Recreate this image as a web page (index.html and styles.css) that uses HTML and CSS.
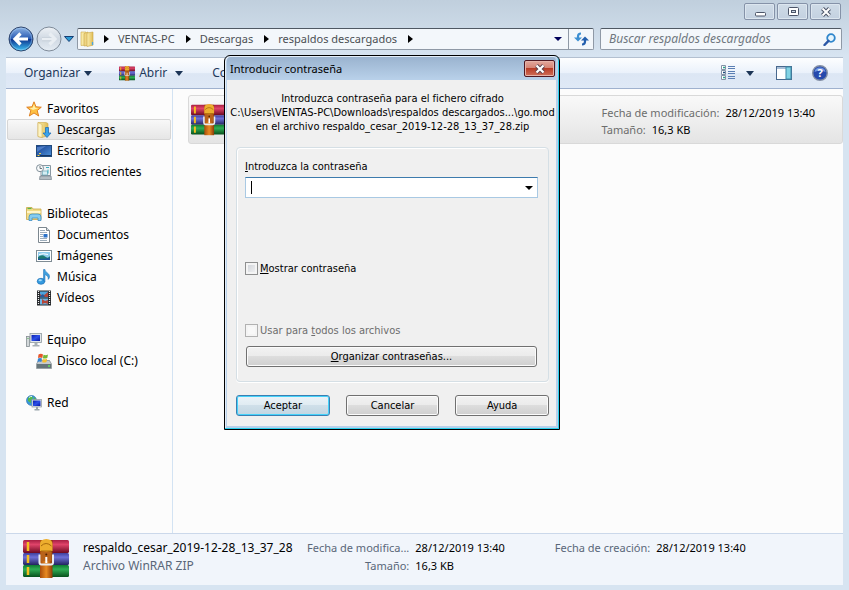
FILE: index.html
```html
<!DOCTYPE html>
<html lang="es">
<head>
<meta charset="utf-8">
<title>respaldos descargados</title>
<link rel="stylesheet" href="styles.css">
</head>
<body>
<svg class="defs" aria-hidden="true">
  <defs>
    <linearGradient id="red" x2="0" y2="1"><stop offset="0" stop-color="#a81f43"/><stop offset=".35" stop-color="#e0446a"/><stop offset="1" stop-color="#6d0a22"/></linearGradient>
    <linearGradient id="blue" x2="0" y2="1"><stop offset="0" stop-color="#3e3f9c"/><stop offset=".35" stop-color="#6e70d8"/><stop offset="1" stop-color="#23245f"/></linearGradient>
    <linearGradient id="green" x2="0" y2="1"><stop offset="0" stop-color="#0f7a30"/><stop offset=".35" stop-color="#2fae55"/><stop offset="1" stop-color="#07501c"/></linearGradient>
    <linearGradient id="strap"><stop offset="0" stop-color="#a84c0c"/><stop offset=".5" stop-color="#e88a22"/><stop offset="1" stop-color="#8a3a08"/></linearGradient>
    <linearGradient id="folder" x2="1"><stop offset="0" stop-color="#fbeeb0"/><stop offset="1" stop-color="#e0bd55"/></linearGradient>
    <linearGradient id="orb" x2="0" y2="1"><stop offset="0" stop-color="#8fb4e4"/><stop offset=".48" stop-color="#2a5cb4"/><stop offset=".5" stop-color="#0b2f8c"/><stop offset="1" stop-color="#3fc4f4"/></linearGradient>
    <linearGradient id="orb-off" x2="0" y2="1"><stop offset="0" stop-color="#eef2f6"/><stop offset=".5" stop-color="#cfd8e2"/><stop offset="1" stop-color="#e6edf4"/></linearGradient>
    <linearGradient id="screen" x2="1" y2="1"><stop offset="0" stop-color="#0a1fae"/><stop offset=".5" stop-color="#2c50e8"/><stop offset="1" stop-color="#0818a0"/></linearGradient>
    <linearGradient id="sky" x2="1" y2="1"><stop offset="0" stop-color="#163a8c"/><stop offset="1" stop-color="#4d94dc"/></linearGradient>
    <symbol id="rar" viewBox="0 0 46 40">
      <rect y="1" width="46" height="13" rx="1.5" fill="url(#red)"/>
      <rect y="14" width="46" height="12" rx="1.5" fill="url(#blue)"/>
      <rect y="26" width="46" height="12" rx="1.5" fill="url(#green)"/>
      <path d="M5 3v9M5 16v8M5 28v8" stroke="#f5c020" stroke-width="2.5"/>
      <rect x="17" y="1" width="12.500" height="38" fill="url(#strap)"/>
      <path d="M17 12V5q0-4.500 6.300-5 6.200.5 6.200 5v7z" fill="#edae2e"/>
      <path d="M18 7q5-5 10.500 0M18 12h10.500" fill="none" stroke="#a86a0c"/>
      <rect x="18" y="13" width="10.500" height="9" fill="#b8621a"/>
      <path d="M17.500 16.500h-1v7q0 2 2 2h9.500q2 0 2-2v-7h-1" fill="none" stroke="#e8ebf0" stroke-width="2"/>
      <path d="M23.300 18v6" stroke="#fff" stroke-width="2"/>
      <circle cx="23.300" cy="15.500" r="1" fill="#4d2203"/>
    </symbol>
    <symbol id="folder-icon" viewBox="0 0 16 16">
      <path d="M1 1h5l1 13-6 .5z" fill="#f8e9a4" stroke="#cda94a" stroke-width=".6"/>
      <path d="M4 2.500 8 1v13.500l-4 .5z" fill="#eed584" stroke="#c9a545" stroke-width=".6"/>
      <path d="M7 2l6-1v13.200L7 15.500z" fill="url(#folder)" stroke="#c9a545" stroke-width=".6"/>
      <path d="M12.500 11v3" stroke="#49a5e0" stroke-width="1.300"/>
    </symbol>
    <symbol id="down-icon" viewBox="0 0 16 16">
      <path d="M2 .5h8l2 1v12l-6 2-4-1z" fill="url(#folder)" stroke="#cda94a" stroke-width=".6"/>
      <path d="M2 .5l4 2v13l-4-1z" fill="#fdf3c3" stroke="#cda94a" stroke-width=".5"/>
      <path d="M9.500 5.500h3V11H15l-4 4.500L7 11h2.500z" fill="#39a3ec" stroke="#1767b5" stroke-width=".7"/>
    </symbol>
    <symbol id="star-icon" viewBox="0 0 16 16">
      <path d="M8 .8l2 5 5.300.4-4.100 3.400 1.500 5.400L8 12l-4.700 3 1.500-5.400L.7 6.200 6 5.800z" fill="#fdc042" stroke="#dd781a" stroke-width=".9" stroke-linejoin="round"/>
      <path d="M8 3l1.200 3.800 3.500.2L7 9 3.500 7l3.200-.3z" fill="#fff0a8"/>
    </symbol>
    <symbol id="desktop-icon" viewBox="0 0 16 16">
      <rect x=".5" y="2.500" width="15" height="11" fill="url(#sky)" stroke="#214a7c"/>
      <path d="M1 4l9-1-9 6z" fill="#6d9ddd" opacity=".6"/>
      <path d="M1 12.500h14" stroke="#163766"/><path d="M1.500 12.500h2M3 10.500h2" stroke="#f2d34a"/>
    </symbol>
    <symbol id="recent-icon" viewBox="0 0 16 16">
      <path d="M5 1.500h9.500v10h-9.500z" fill="#eef2f4" stroke="#8a98a2"/>
      <path d="M4 12h11l.5 3.500h-12z" fill="#b4bcc2" stroke="#77838c" stroke-width=".7"/>
      <rect x="6.500" y="7" width="5" height="4" fill="#d6eef4" stroke="#6ba6b6" stroke-width=".7"/>
      <path d="M10 3.500h3M12 5.500v4" stroke="#39adc0"/>
      <circle cx="4" cy="4.200" r="3.500" fill="#f8fafb" stroke="#82909a"/><path d="M4 2v2.500h2" fill="none" stroke="#4a5861" stroke-width=".8"/>
    </symbol>
    <symbol id="library-icon" viewBox="0 0 16 16">
      <path d="M.5 1.500H6L7 3h8v10.500H.5z" fill="#f1dc88" stroke="#c9a848" stroke-width=".8"/>
      <path d="M1.500 2.500h4" stroke="#59b64a" stroke-width="1.200"/><path d="M1 6h13.500" stroke="#fff5c8" stroke-width="2"/>
      <path d="M3 14.500V11q0-3 3-3h6q3 0 3 3v3.500h-3V12H6v2.500z" fill="#86cdf0" stroke="#3f8fc4" stroke-width=".8"/>
    </symbol>
    <symbol id="doc-icon" viewBox="0 0 16 16">
      <path d="M2.500.5h8l3 3v12h-11z" fill="#fff" stroke="#7c878f"/><path d="M10.500.5v3h3" fill="#d7dfe5" stroke="#7c878f"/>
      <path d="M4 3.500h5M4 5.500h7M4 7.500h3M4 9.500h3M4 11.500h7M4 13.500h7" stroke="#9dadbb"/><rect x="7.500" y="7" width="4" height="3.500" fill="#2c72c8"/>
    </symbol>
    <symbol id="image-icon" viewBox="0 0 16 16">
      <rect x=".5" y="2.500" width="15" height="11" fill="#fff" stroke="#7f8c94"/><rect x="2" y="4" width="12" height="8" fill="#8fcbec"/>
      <path d="M2 9q4-3 7-.5t5-.5v4H2z" fill="#1d7a70"/><path d="M2 10.500q5 1 12-1V12H2z" fill="#1e5698"/><path d="M3 6.500q4-1.500 9 0" stroke="#fff" fill="none"/>
    </symbol>
    <symbol id="music-icon" viewBox="0 0 16 16">
      <ellipse cx="5" cy="12.300" rx="3.800" ry="3" fill="#349be0" stroke="#1c6fb4" stroke-width=".7"/><ellipse cx="4.200" cy="11.300" rx="1.700" ry="1" fill="#a7dbf7"/>
      <path d="M7.500 12V.5h1.500c0 3 5 3.500 4.500 7.500-.3 1.500-.8 2-1.500 2.500C13 7 9.500 6 9 5.500v7z" fill="#3f9fdd" stroke="#1c6fb4" stroke-width=".5"/>
    </symbol>
    <symbol id="video-icon" viewBox="0 0 16 16">
      <rect x="1" y=".5" width="14" height="15" fill="#26292c"/><rect x="4" y="1.500" width="8" height="6" fill="#4fa3dc"/><rect x="4" y="8.500" width="8" height="6" fill="#6fb5e4"/>
      <path d="M4 4l3 2 5-4v5H4zM6 9l3 2 3-1v4l-3-1-3 1z" fill="#b2463a"/><path d="M4 6l3-2 2 3H4z" fill="#2a5a9a"/>
      <path d="M2.500 1v14M13.500 1v14" stroke="#f0f0f0" stroke-width="1.200" stroke-dasharray="1 1"/>
    </symbol>
    <symbol id="pc-icon" viewBox="0 0 16 16">
      <rect x=".5" y="4.500" width="3" height="10" fill="#d3d8da" stroke="#848d92" stroke-width=".8"/><path d="M1.500 6.500h1" stroke="#48b348"/>
      <rect x="4" y="1.500" width="11.500" height="9" fill="#e2e6ea" stroke="#8e999f" stroke-width=".8"/><rect x="5.500" y="3" width="8.500" height="6" fill="url(#screen)"/>
      <path d="M8.500 11h3v2h2v1.500H6.500V13h2z" fill="#a7b0b5"/>
    </symbol>
    <symbol id="disk-icon" viewBox="0 0 16 16">
      <path d="M2.500 7.500h11L15.500 11v4.500H.5V11z" fill="#c4cacd" stroke="#7b8589" stroke-width=".7"/><rect x="1" y="11" width="14" height="4" fill="#66757a"/><path d="M12 13h2" stroke="#5fe25f" stroke-width="1.400"/>
      <path d="M2.500 1.500q2.500-1.500 4.500 0L6.300 5Q4 4 2 5z" fill="#e7552a"/><path d="M7.500 1.800q2.500 1 4.500-.3L11.300 5q-2.500 1-4.500.2z" fill="#77b838"/>
      <path d="M2 5.600Q4 4.600 6 5.600L5.400 9q-2-1-4 0z" fill="#3583d0"/><path d="M6.700 5.900q2.300.8 4.400-.2L10.500 9q-2.200 1-4.300.2z" fill="#f5bd2e"/>
    </symbol>
    <symbol id="net-icon" viewBox="0 0 16 16">
      <circle cx="5.500" cy="5.500" r="5" fill="#3999dc" stroke="#2a6aa8" stroke-width=".6"/><path d="M2 3q2-2.500 4-2l1 2-2 2v3L2 6zM8 2l2 2v2L7.500 6z" fill="#56b948"/><path d="M3 2.500q1.500-1.300 3-1" stroke="#d8f3ff" fill="none"/>
      <rect x="6" y="4.500" width="9.500" height="7.500" fill="#dfe4e8" stroke="#8b979d" stroke-width=".7"/><rect x="7" y="5.500" width="7.500" height="5.500" fill="url(#screen)"/><path d="M10 12h2v2h1.500v1.500h-5V14H10z" fill="#9aa5ab"/>
    </symbol>
  </defs>
</svg>

<div class="window">
  <header class="caption">
    <button class="cap" aria-label="Minimizar"><svg width="12" height="10"><rect x="1.500" y="5.500" width="10" height="3.500" rx="1" fill="#fff" stroke="#4c5568"/></svg></button>
    <button class="cap" aria-label="Maximizar"><svg width="12" height="10"><rect x="1.500" y=".5" width="10" height="8" rx="1" fill="#fff" stroke="#4c5568"/><rect x="4.500" y="3.500" width="4" height="2" fill="#cbd7e4" stroke="#4c5568"/></svg></button>
    <button class="cap" aria-label="Cerrar"><svg width="12" height="10"><path d="M2.500 1.500l7 7M9.500 1.500l-7 7" stroke="#4c5568" stroke-width="4"/><path d="M2.500 1.500l7 7M9.500 1.500l-7 7" stroke="#fff" stroke-width="2"/></svg></button>
  </header>

  <nav class="navbar">
    <div class="orbs">
      <button class="orb" aria-label="Atrás"><svg width="26" height="26"><circle cx="13" cy="13" r="12" fill="url(#orb)" stroke="#32486e"/><circle cx="13" cy="13" r="10.800" fill="none" stroke="#a9d1f2" stroke-width=".7" opacity=".7"/><path d="M20 13H8M12.500 7.500L7 13l5.500 5.500" fill="none" stroke="#fff" stroke-width="3.200"/></svg></button>
      <button class="orb" aria-label="Adelante"><svg width="26" height="26"><circle cx="13" cy="13" r="12" fill="url(#orb-off)" stroke="#7f8b99"/><path d="M6 13h12M13.500 7.500L19 13l-5.500 5.500" fill="none" stroke="#e9eef3" stroke-width="3.200"/><path d="M6 11.500h9.500M6 14.700h9.500" stroke="#bcc7d2" stroke-width=".6"/></svg></button>
      <button class="history" aria-label="Páginas recientes"><svg width="10" height="6"><path d="M.5.5h9L5 5.500z" fill="#2c9ad4" stroke="#163f75"/></svg></button>
    </div>
    <div class="address">
      <svg class="addr-icon" width="16" height="18"><use href="#folder-icon"/></svg>
      <i class="crumb-arrow"></i><a class="crumb" href="#">VENTAS-PC</a>
      <i class="crumb-arrow"></i><a class="crumb" href="#">Descargas</a>
      <i class="crumb-arrow"></i><a class="crumb" href="#">respaldos descargados</a>
      <i class="crumb-arrow"></i>
      <button class="drop" aria-label="Ubicaciones anteriores"><i class="tri navy"></i></button>
      <button class="refresh" aria-label="Actualizar"><svg width="15" height="14"><path d="M7 1.500Q4 1.500 4 4.500V7" fill="none" stroke="#3c8fd2" stroke-width="2.200"/><path d="M0 5.500h8L4 9.500z" fill="#3c8fd2"/><path d="M8 12.500q3 0 3-3V7" fill="none" stroke="#235fae" stroke-width="2.200"/><path d="M7 8.500h8L11 4.500z" fill="#235fae"/></svg></button>
    </div>
    <label class="search">
      <input type="search" placeholder="Buscar respaldos descargados" aria-label="Buscar respaldos descargados">
      <svg width="13" height="13"><circle cx="8" cy="5" r="3.800" fill="#e6f5fd" stroke="#2f86cc" stroke-width="1.800"/><path d="M5.500 7.800L1.500 12" stroke="#2b57a6" stroke-width="2.400" stroke-linecap="round"/></svg>
    </label>
  </nav>

  <div class="toolbar">
    <button class="tool organize">Organizar <i class="tri"></i></button>
    <button class="tool open"><svg width="16" height="15" viewBox="0 0 46 40" preserveAspectRatio="none"><use href="#rar" width="46" height="40"/></svg>Abrir <i class="tri"></i></button>
    <button class="tool">Co</button>
    <span class="spacer"></span>
    <button class="tool views" aria-label="Cambiar la vista"><svg width="14" height="16"><path d="M.5.5h4v4h-4zM.5 5.500h4v4h-4zM.5 10.500h4v4h-4z" fill="#fff" stroke="#8291a6"/><path d="M2 2.500h2M2 12.500h2" stroke="#2aa58c" stroke-width="1.500"/><path d="M2 7.500h2" stroke="#1c4b7c" stroke-width="1.500"/><path d="M7 1.500h7M7 3.500h7M7 6.500h7M7 8.500h7M7 11.500h7M7 13.500h7" stroke="#5b7fb4"/></svg><i class="tri"></i></button>
    <button class="tool" aria-label="Panel de vista previa"><svg width="16" height="14"><rect x=".5" y=".5" width="15" height="13" fill="#fff" stroke="#48688e"/><path d="M1 2h14" stroke="#a9bfd8" stroke-width="2"/><rect x="10" y="1" width="5" height="12" fill="#82d3e4" stroke="#3d8aa8"/></svg></button>
    <button class="tool help" aria-label="Ayuda"><svg width="16" height="16"><circle cx="8" cy="8" r="7.300" fill="#2649ac" stroke="#838fa5" stroke-width="1.400"/><path d="M2.500 7q5.500-3 11 0Q13 2.500 8 2.500T2.500 7" fill="#6f94e0"/><text x="8" y="12" text-anchor="middle" class="q">?</text></svg></button>
  </div>

  <main class="body">
    <aside class="tree">
      <ul>
        <li><a class="top" href="#"><svg><use href="#star-icon"/></svg>Favoritos</a>
          <ul>
            <li><a class="selected" href="#"><svg><use href="#down-icon"/></svg>Descargas</a></li>
            <li><a href="#"><svg><use href="#desktop-icon"/></svg>Escritorio</a></li>
            <li><a href="#"><svg><use href="#recent-icon"/></svg>Sitios recientes</a></li>
          </ul></li>
        <li><a class="top" href="#"><svg><use href="#library-icon"/></svg>Bibliotecas</a>
          <ul>
            <li><a href="#"><svg><use href="#doc-icon"/></svg>Documentos</a></li>
            <li><a href="#"><svg><use href="#image-icon"/></svg>Imágenes</a></li>
            <li><a href="#"><svg><use href="#music-icon"/></svg>Música</a></li>
            <li><a href="#"><svg><use href="#video-icon"/></svg>Vídeos</a></li>
          </ul></li>
        <li><a class="top" href="#"><svg><use href="#pc-icon"/></svg>Equipo</a>
          <ul><li><a href="#"><svg><use href="#disk-icon"/></svg>Disco local (C:)</a></li></ul></li>
        <li><a class="top" href="#"><svg><use href="#net-icon"/></svg>Red</a></li>
      </ul>
    </aside>
    <section class="files">
      <article class="file">
        <svg width="36" height="32" viewBox="0 0 46 40" preserveAspectRatio="none"><use href="#rar" width="46" height="40"/></svg>
        <dl>
          <div><dt>Fecha de modificación:</dt><dd>28/12/2019 13:40</dd></div>
          <div><dt>Tamaño:</dt><dd>16,3 KB</dd></div>
        </dl>
      </article>
    </section>
  </main>

  <footer class="details">
    <svg width="46" height="40"><use href="#rar"/></svg>
    <div class="name"><strong>respaldo_cesar_2019-12-28_13_37_28</strong><span>Archivo WinRAR ZIP</span></div>
    <dl class="props">
      <dt>Fecha de modifica...</dt><dd>28/12/2019 13:40</dd>
      <dt>Tamaño:</dt><dd>16,3 KB</dd>
    </dl>
    <dl class="props"><dt>Fecha de creación:</dt><dd>28/12/2019 13:40</dd></dl>
  </footer>
</div>

<form class="dialog" role="dialog" aria-labelledby="dlg-title">
  <header class="dlg-head">
    <h1 id="dlg-title">Introducir contraseña</h1>
    <button type="button" class="close" aria-label="Cerrar"><svg width="12" height="10"><path d="M2.500 1.500l7 7M9.500 1.500l-7 7" stroke="#5c4450" stroke-width="4"/><path d="M2.500 1.500l7 7M9.500 1.500l-7 7" stroke="#fff" stroke-width="2.200"/></svg></button>
  </header>
  <div class="dlg-body">
    <p class="message">Introduzca contraseña para el fichero cifrado<br>C:\Users\VENTAS-PC\Downloads\respaldos descargados...\go.mod<br>en el archivo respaldo_cesar_2019-12-28_13_37_28.zip</p>
    <div class="group">
      <label for="pwd"><u>I</u>ntroduzca la contraseña</label>
      <div class="combo"><i class="caret"></i><input id="pwd" type="text"><button type="button" aria-label="Contraseñas guardadas"><i class="tri black"></i></button></div>
      <label class="check show"><input type="checkbox"><span><u>M</u>ostrar contraseña</span></label>
      <label class="check all"><input type="checkbox" disabled><span>Usar para <u>t</u>odos los archivos</span></label>
      <button type="button" class="btn"><span><u>O</u>rganizar contraseñas...</span></button>
    </div>
    <div class="actions">
      <button type="button" class="btn default">Aceptar</button>
      <button type="button" class="btn">Cancelar</button>
      <button type="button" class="btn">Ayuda</button>
    </div>
  </div>
</form>
</body>
</html>
```

FILE: styles.css
```css
* { box-sizing: border-box; }
body, ul, dl, dd, p, h1 { margin: 0; padding: 0; }
body {
  font: 12px/16px "Noto Sans", "Open Sans", sans-serif;
  color: #000;
  background: #d7e4f1;
}
button, input { font: inherit; color: inherit; margin: 0; padding: 0; border: 0; background: none; }
a { color: inherit; text-decoration: none; }
ul { list-style: none; }
svg { flex: none; display: block; }
.defs { position: absolute; width: 0; height: 0; }

.window {
  display: flex;
  flex-direction: column;
  min-height: 100vh;
  padding: 0 6px 5px;
  background: linear-gradient(#c0cfdd, #d7e4f1 56px);
}

.caption { display: flex; justify-content: flex-end; gap: 2px; height: 25px; padding: 3px 2px 0 0; }
.cap {
  display: grid;
  place-items: center;
  width: 31px;
  height: 17px;
  border: 1px solid #8592a8;
  border-radius: 2px;
  background: linear-gradient(#cfdbe7, #c3d1e0);
  box-shadow: inset 0 0 0 1px #dce6ef;
}

.navbar { display: flex; align-items: center; height: 32px; padding: 0 1px 4px 2px; }
.orbs { display: flex; align-items: center; gap: 2px; width: 69px; }
.address, .search {
  display: flex;
  align-items: center;
  height: 22px;
  border: 1px solid #8f99a6;
  border-top-color: #4f5863;
  border-radius: 2px;
  background: #f3f7fb;
}
.address { flex: 1; margin-right: 6px; padding-left: 2px; color: #4b4f54; font-size: 11px; white-space: nowrap; }
.addr-icon { margin-right: 8px; }
.crumb { margin: 0 11px 0 9px; }
.crumb-arrow { border: 4px solid transparent; border-left: 5px solid #000; border-right: 0; }
.drop { width: 20px; height: 20px; margin-left: auto; display: grid; place-items: center; }
.refresh { width: 25px; height: 20px; display: grid; place-items: center; border-left: 1px solid #8f99a6; }
.search { flex: 0 1 242px; padding: 0 5px 0 8px; }
.search input { flex: 1; min-width: 0; outline: 0; font-style: italic; }
.search input::placeholder { color: #707780; }

.tri { display: inline-block; border: 4px solid transparent; border-top: 5px solid #1c3557; border-bottom: 0; }
.tri.navy { border-top: 4px solid #00005a; }
.tri.black { border-top: 4px solid #000; }

.toolbar {
  display: flex;
  align-items: center;
  height: 32px;
  padding: 0 15px 0 18px;
  border-top: 1px solid #b3c0d0;
  border-bottom: 1px solid #9fb1ce;
  background: linear-gradient(#fdfeff, #eaf1fb 50%, #dce6f4 52%, #dfe9f6);
  color: #1e395b;
}
.tool { display: flex; align-items: center; gap: 4px; white-space: nowrap; }
.organize { margin-right: 27px; }
.open { margin-right: 29px; }
.open .tri { margin-left: 4px; }
.spacer { flex: 1; }
.views { gap: 11px; margin-right: 22px; }
.help { margin-left: 20px; }
.q { font: bold 11px "Noto Sans", sans-serif; fill: #fff; }

.body { display: flex; flex: 1; background: #fcfcfc; }
.tree { width: 167px; padding: 9px 1px 0; border-right: 1px solid #d3e3f3; }
.tree > ul > li { margin-bottom: 21px; }
.tree a { display: flex; align-items: center; gap: 5px; height: 21px; padding-left: 28px; border: 1px solid transparent; border-radius: 2px; }
.tree a.top { padding-left: 18px; }
.tree a.selected { border-color: #d6d6d6; background: linear-gradient(#f8f8f8, #e6e6e6); }
.tree svg { width: 16px; height: 16px; }
.files { flex: 1; padding: 6px 0 0 15px; }
.file {
  display: flex;
  align-items: center;
  justify-content: space-between;
  height: 49px;
  padding: 0 27px 0 2px;
  border: 1px solid #d9d9d9;
  border-radius: 3px;
  background: linear-gradient(#f9f9f9, #e4e4e4);
}
.file dl { font-size: 11px; line-height: 17px; padding-top: 3px; }
.file dl div { display: flex; gap: 6px; }
.file dt, .props dt { color: #6d6d6d; }

.details {
  display: flex;
  align-items: flex-start;
  height: 52px;
  padding: 5px 17px 0;
  border-top: 1px solid #cbd8ea;
  background: #f1f5fb;
  line-height: 18px;
  white-space: nowrap;
}
.name { display: flex; flex-direction: column; width: 224px; margin-left: 14px; }
.name strong { font-weight: 400; }
.name span, .props dt { color: #5a6779; }
.props { display: grid; grid-template-columns: auto auto; column-gap: 6px; margin-right: 50px; font-size: 11px; }
.props dt { text-align: right; }

.dialog {
  position: absolute;
  top: 55px;
  left: 224px;
  width: 336px;
  border: 1px solid #000;
  border-radius: 6px 6px 0 0;
  background: #b9d1ea;
  box-shadow: inset -1px -1px #2cd0ee, inset 1px 1px #e4eef8;
  padding: 1px 3px 3px 2px;
  font: 11px/14px "DejaVu Sans Condensed", "Noto Sans", sans-serif;
}
.dlg-head {
  display: flex;
  align-items: center;
  justify-content: space-between;
  height: 23px;
  padding: 0 1px 0 3px;
  border-radius: 4px 4px 0 0;
  background: linear-gradient(#9ab3cf, #b9d1ea);
}
.dlg-head h1 { font: 11px/16px "Noto Sans", sans-serif; }
.close {
  display: grid;
  place-items: center;
  width: 31px;
  height: 17px;
  border: 1px solid #4f1822;
  border-radius: 2px;
  background: linear-gradient(#e3a89d, #d58374 48%, #b83c27 50%, #d0705a);
  box-shadow: inset 0 0 0 1px #e6b3a9;
}
.dlg-body { background: #f0f0f0; padding: 12px 7px 10px 9px; }
.message { height: 55px; margin: 0 -8px; text-align: center; white-space: nowrap; }
.group {
  display: flex;
  flex-direction: column;
  padding: 12px 10px 14px 8px;
  margin-bottom: 13px;
  border: 1px solid #d5dfe5;
  border-radius: 4px;
  box-shadow: inset 1px 1px #fff, 0 1px #fff;
}
u { text-underline-offset: 1px; }
.combo {
  display: flex;
  align-items: center;
  height: 21px;
  margin: 3px 0 63px;
  padding-left: 5px;
  border: 1px solid #a9c9e3;
  border-top-color: #3d7bad;
  background: #fff;
}
.combo input { flex: 1; min-width: 0; outline: 0; }
.combo button { width: 16px; display: grid; place-items: center; }
.caret { width: 1px; height: 13px; background: #000; }
.check { display: flex; align-items: center; gap: 2px; height: 15px; }
.check input {
  appearance: none;
  width: 13px;
  height: 13px;
  border: 1px solid #8e8f8f;
  background: linear-gradient(135deg, #cbcfd5, #f6f6f6);
  box-shadow: inset 0 0 0 2px #f4f4f4;
}
.check input:disabled { border-color: #b1b1b1; background: #f8f8f8; }
.check.show { margin-bottom: 47px; }
.check.all { margin-bottom: 8px; color: #6d6d6d; }
.btn {
  height: 21px;
  border: 1px solid #707070;
  border-radius: 3px;
  background: linear-gradient(#f2f2f2, #ebebeb 49%, #dddddd 50%, #cfcfcf);
  box-shadow: inset 0 0 0 1px #fbfbfb;
}
.group .btn { margin: 0 1px; }
.btn.default {
  border-color: #3c7fb1;
  background: linear-gradient(#ecf3f8, #dfebf2 49%, #cfdfe9 50%, #c2d6e2);
  box-shadow: inset 0 0 0 1px #45d2fa;
}
.actions { display: grid; grid-template-columns: repeat(3, 1fr); gap: 16px; }
```
